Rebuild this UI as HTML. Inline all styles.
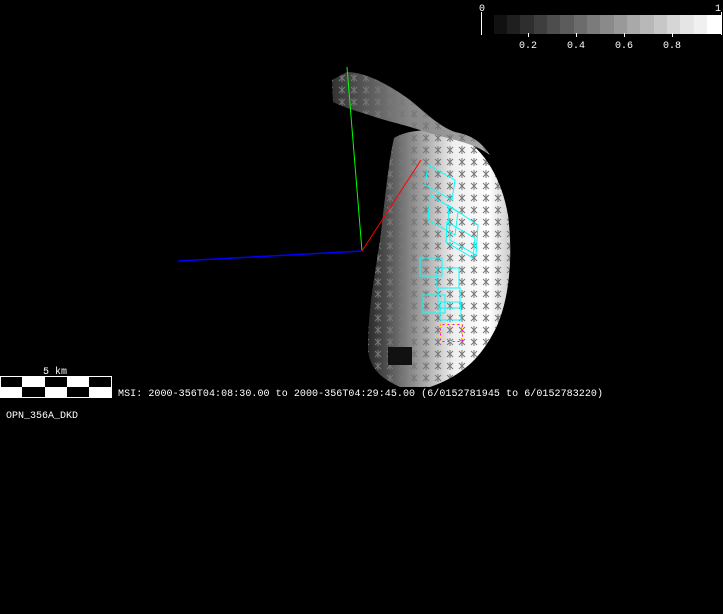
<!DOCTYPE html>
<html><head><style>
html,body{margin:0;padding:0;background:#000;width:723px;height:614px;overflow:hidden}
svg{position:absolute;left:0;top:0}
text{font-family:"Liberation Mono",monospace;fill:#fff;font-size:10px}
</style></head><body>
<svg width="723" height="614" viewBox="0 0 723 614">
<defs>
<linearGradient id="g" x1="0" y1="0" x2="1" y2="0">
<stop offset="0" stop-color="#2a2a2a"/><stop offset="0.15" stop-color="#555"/><stop offset="0.3" stop-color="#888"/>
<stop offset="0.45" stop-color="#bbb"/><stop offset="0.6" stop-color="#eee"/><stop offset="0.85" stop-color="#fff"/><stop offset="1" stop-color="#ccc"/>
</linearGradient>
<linearGradient id="h" x1="0" y1="0" x2="1" y2="0">
<stop offset="0" stop-color="#333"/><stop offset="0.5" stop-color="#888"/><stop offset="1" stop-color="#aaa"/>
</linearGradient>
<pattern id="p" width="12" height="12" patternUnits="userSpaceOnUse">
<path d="M3 3 L9 9 M9 3 L3 9 M6 2 V10" stroke="#777" stroke-width="1"/>
</pattern>
</defs>
<!-- colorbar -->
<g>
<rect x="494" y="15" width="14" height="19" fill="#111"/><rect x="507" y="15" width="14" height="19" fill="#1f1f1f"/>
<rect x="520" y="15" width="14" height="19" fill="#2e2e2e"/><rect x="534" y="15" width="14" height="19" fill="#3e3e3e"/>
<rect x="547" y="15" width="14" height="19" fill="#4d4d4d"/><rect x="560" y="15" width="14" height="19" fill="#5c5c5c"/>
<rect x="574" y="15" width="14" height="19" fill="#6c6c6c"/><rect x="587" y="15" width="14" height="19" fill="#7b7b7b"/>
<rect x="600" y="15" width="14" height="19" fill="#8a8a8a"/><rect x="614" y="15" width="14" height="19" fill="#999"/>
<rect x="627" y="15" width="14" height="19" fill="#a9a9a9"/><rect x="640" y="15" width="14" height="19" fill="#b8b8b8"/>
<rect x="654" y="15" width="14" height="19" fill="#c7c7c7"/><rect x="667" y="15" width="14" height="19" fill="#d6d6d6"/>
<rect x="680" y="15" width="14" height="19" fill="#e5e5e5"/><rect x="694" y="15" width="14" height="19" fill="#f0f0f0"/>
<rect x="707" y="15" width="15" height="19" fill="#fff"/>
<line x1="481.5" y1="12" x2="481.5" y2="35" stroke="#fff"/>
<line x1="721.5" y1="12" x2="721.5" y2="35" stroke="#fff"/>
<line x1="528.5" y1="33" x2="528.5" y2="37" stroke="#fff"/><line x1="576.5" y1="33" x2="576.5" y2="37" stroke="#fff"/>
<line x1="624.5" y1="33" x2="624.5" y2="37" stroke="#fff"/><line x1="672.5" y1="33" x2="672.5" y2="37" stroke="#fff"/>
<text x="479" y="11">0</text><text x="715" y="11">1</text>
<text x="519" y="48">0.2</text><text x="567" y="48">0.4</text><text x="615" y="48">0.6</text><text x="663" y="48">0.8</text>
</g>
<!-- body -->
<path d="M394 138 C410 128 440 128 460 136 C485 150 502 180 508 215 C513 255 510 300 495 330 C482 355 465 375 430 387 L400 387 C380 378 370 368 368 350 C368 310 374 280 380 240 C385 200 388 165 394 138 Z" fill="url(#g)"/>
<path d="M394 138 C410 128 440 128 460 136 C485 150 502 180 508 215 C513 255 510 300 495 330 C482 355 465 375 430 387 L400 387 C380 378 370 368 368 350 C368 310 374 280 380 240 C385 200 388 165 394 138 Z" fill="url(#p)"/>
<!-- horn -->
<path d="M347 72 C365 72 390 85 410 100 C425 112 438 126 455 132 C470 135 480 140 490 155 C470 140 440 138 420 130 C405 125 390 122 375 117 C360 112 345 108 333 102 L332 80 Z" fill="url(#h)"/>
<path d="M347 72 C365 72 390 85 410 100 C425 112 438 126 455 132 C470 135 480 140 490 155 C470 140 440 138 420 130 C405 125 390 122 375 117 C360 112 345 108 333 102 L332 80 Z" fill="url(#p)"/>
<rect x="388" y="347" width="24" height="18" fill="#111"/>
<!-- axes -->
<line x1="347" y1="67" x2="362" y2="251" stroke="#0f0"/>
<line x1="362" y1="251" x2="421" y2="160" stroke="#f00"/>
<line x1="178" y1="261" x2="362" y2="251" stroke="#00f" stroke-width="1.5"/>
<!-- footprints -->
<g fill="none" stroke="#0ff" stroke-width="1">
<path d="M428 165 L455 180 L452 200 L425 185 Z"/><path d="M430 195 L458 212 L455 235 L428 220 Z"/>
<path d="M448 205 L478 225 L476 255 L450 240 Z"/><path d="M447 222 L475 238 L473 258 L446 242 Z"/>
<rect x="420" y="258" width="22" height="18"/><rect x="437" y="268" width="22" height="20"/>
<rect x="423" y="295" width="22" height="18"/><rect x="438" y="288" width="22" height="20"/>
<rect x="440" y="302" width="21" height="18"/>
</g>
<rect x="440.5" y="324.5" width="22" height="17" fill="none" stroke="#ff0" stroke-dasharray="3 2"/>
<rect x="440.5" y="324.5" width="22" height="17" fill="none" stroke="#f0f" stroke-dasharray="2 3" stroke-dashoffset="3"/>
<!-- scale bar -->
<text x="43" y="374">5 km</text>
<rect x="0.5" y="376.5" width="111" height="21" fill="#fff" stroke="#fff"/>
<rect x="1" y="377" width="21" height="10" fill="#000"/><rect x="45" y="377" width="22" height="10" fill="#000"/>
<rect x="89" y="377" width="22" height="10" fill="#000"/>
<rect x="22" y="387" width="23" height="10" fill="#000"/><rect x="67" y="387" width="22" height="10" fill="#000"/>
<text x="118" y="396" textLength="485">MSI:  2000-356T04:08:30.00 to 2000-356T04:29:45.00 (6/0152781945 to 6/0152783220)</text>
<text x="6" y="418">OPN_356A_DKD</text>
</svg>
</body></html>
